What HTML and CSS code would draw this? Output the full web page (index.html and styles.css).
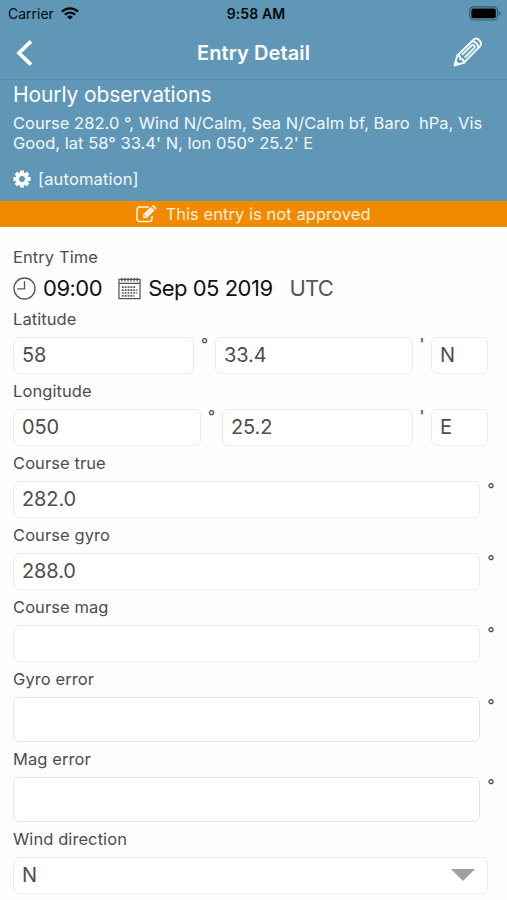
FILE: index.html
```html
<!DOCTYPE html>
<html lang="en">
<head>
<meta charset="utf-8">
<title>Entry Detail</title>
<link rel="stylesheet" href="styles.css">
</head>
<body>
<header class="top">
  <div class="status">
    <div class="carrier"><span>Carrier</span>
      <svg class="wifi" width="18" height="13" viewBox="0 0 18 13"><g fill="none" stroke="#05090c" stroke-width="2.3"><path d="M1 4.7a11.3 11.3 0 0 1 16 0"/><path d="M3.9 7.8a7.2 7.2 0 0 1 10.2 0"/></g><path d="M9 12.6 6.1 9.9a4.2 4.2 0 0 1 5.8 0z" fill="#05090c"/></svg>
    </div>
    <span class="clock">9:58 AM</span>
    <svg class="battery" width="32" height="15" viewBox="0 0 32 15"><rect x=".8" y=".8" width="27.6" height="13.2" rx="3.6" fill="none" stroke="#345870" stroke-width="1.2"/><rect x="2.4" y="2.6" width="24.4" height="9.6" rx="1.8" fill="#000"/><path d="M29.7 5.2q1.8.6 1.8 2.2t-1.8 2.2z" fill="#345870"/></svg>
  </div>
  <nav class="nav">
    <svg class="back" width="20" height="30" viewBox="0 0 20 30"><path d="M17 3.4 5 15l12 11.6" fill="none" stroke="#fff" stroke-width="3.8"/></svg>
    <h1 class="title">Entry Detail</h1>
    <svg class="pencil" width="32" height="32" viewBox="0 0 32 32"><g fill="none" stroke="#eef7fb" stroke-width="2" stroke-linejoin="round" stroke-linecap="round"><path d="M2.5 29.5 5.2 19.8 21.8 3.5q2.6-2.2 5.5.8t.9 5.8L11.8 26.8z"/><path d="M5.2 19.8q3.6-.2 3.1 3.3 3.8-.2 3.5 3.7M20 5.3q5.4.3 6.4 6.5"/><path d="m10.6 18.4 9.2-9.1q1.4-.8 2.4.2t.2 2.4l-9.2 9.1"/></g><path d="m2.5 29.5 1.4-5 3.6 3.5z" fill="#fff"/></svg>
  </nav>
</header>
<section class="summary">
  <h2 class="heading">Hourly observations</h2>
  <p class="details"><span class="line">Course 282.0 °, Wind N/Calm, Sea N/Calm bf, Baro&nbsp; hPa, Vis</span> <span class="line">Good, lat 58° 33.4' N, lon 050° 25.2' E</span></p>
  <div class="source">
    <svg width="18" height="18" viewBox="-9 -9 18 18"><g fill="#fff"><rect x="-2" y="-8.6" width="4" height="17.2" rx=".6"/><rect x="-2" y="-8.6" width="4" height="17.2" rx=".6" transform="rotate(45)"/><rect x="-2" y="-8.6" width="4" height="17.2" rx=".6" transform="rotate(90)"/><rect x="-2" y="-8.6" width="4" height="17.2" rx=".6" transform="rotate(135)"/><circle r="6.6"/></g><circle r="2.9" fill="#6097b6"/></svg>
    <span>[automation]</span>
  </div>
</section>
<div class="banner">
  <svg width="21" height="18" viewBox="0 0 21 18"><path d="M13 2H4a3 3 0 0 0-3 3v8.5a3 3 0 0 0 3 3h9a3 3 0 0 0 3-3v-2.4" fill="none" stroke="#fff0da" stroke-width="1.6"/><path d="m7.2 9.2 7.6-7.4 3.7 3.7-7.6 7.5H7.2zM15.8 1l.8-.7q.8-.5 1.5.1l2 2q.7.8 0 1.6l-.7.7z" fill="#fff0da"/><path d="m8.1 10 1.9 2" stroke="#f28a00" stroke-width=".9"/></svg>
  <span>This entry is not approved</span>
</div>
<main class="form">
  <div class="label entry-time">Entry Time</div>
  <div class="time-row">
    <svg width="23" height="23" viewBox="0 0 23 23"><circle cx="11.5" cy="11.5" r="10.5" fill="none" stroke="#55585b" stroke-width="1.3"/><path d="M11.5 4.2v7.6H4.3" fill="none" stroke="#55585b" stroke-width="1.3"/></svg>
    <span class="hour">09:00</span>
    <svg class="calendar" width="23" height="23" viewBox="0 0 24 23"><path d="M1 2h22v20H1zM1 6.2h22" fill="none" stroke="#505559" stroke-width="1.3"/><path d="M3.4 2.3h18" stroke="#505559" stroke-width="4" stroke-dasharray="1.3 1.9"/><path d="M4 10h14M4 13.2h16M4 16.2h16M4 19.2h13" stroke="#505559" stroke-width="1.8" stroke-dasharray="1.9 1.1"/></svg>
    <span class="date">Sep 05 2019</span>
    <span class="zone">UTC</span>
  </div>
  <div class="label">Latitude</div>
  <div class="row"><div class="field lat-degrees">58</div><span class="unit">°</span><div class="field grow">33.4</div><span class="unit minute">'</span><div class="field hemisphere">N</div></div>
  <div class="label">Longitude</div>
  <div class="row"><div class="field lon-degrees">050</div><span class="unit">°</span><div class="field grow">25.2</div><span class="unit minute">'</span><div class="field hemisphere">E</div></div>
  <div class="label">Course true</div>
  <div class="row single"><div class="field grow">282.0</div><span class="unit">°</span></div>
  <div class="label">Course gyro</div>
  <div class="row single"><div class="field grow">288.0</div><span class="unit">°</span></div>
  <div class="label">Course mag</div>
  <div class="row single"><div class="field grow"></div><span class="unit">°</span></div>
  <div class="label">Gyro error</div>
  <div class="row single"><div class="field grow tall"></div><span class="unit">°</span></div>
  <div class="label">Mag error</div>
  <div class="row single"><div class="field grow tall"></div><span class="unit">°</span></div>
  <div class="label">Wind direction</div>
  <div class="row"><div class="field grow select"><span>N</span><svg width="24" height="12" viewBox="0 0 24 12"><path d="M0 0h24L12 12z" fill="#a0a0a0"/></svg></div></div>
</main>
</body>
</html>
```
FILE: styles.css
```css
* { box-sizing: border-box; }
body {
  margin: 0;
  width: 507px;
  height: 900px;
  overflow: hidden;
  background: #fefefe;
  color: #4b4d50;
  font-family: Inter, "Liberation Sans", sans-serif;
}
svg { display: block; flex: none; }
h1, h2, p { margin: 0; font-weight: 400; }
.top, .summary { background: #6097b6; color: #fff; }
.top { height: 80px; border-bottom: 1px solid #568cab; }
.status {
  display: grid;
  grid-template-columns: 1fr auto 1fr;
  align-items: center;
  height: 27px;
  padding: 0 6px 0 8px;
  color: #05090c;
  font-size: 14px;
}
.carrier { display: flex; align-items: center; gap: 7px; }
.clock { padding-left: 3px; font-weight: 600; letter-spacing: .1px; }
.battery { justify-self: end; }
.nav {
  display: grid;
  grid-template-columns: 1fr auto 1fr;
  align-items: center;
  height: 51px;
  padding: 0 23px 0 14px;
}
.title { padding-left: 9px; font-size: 20px; font-weight: 600; letter-spacing: .1px; line-height: 24px; }
.pencil { justify-self: end; margin-top: -2px; }
.summary { height: 121px; padding: 1px 13px 0; }
.heading { font-size: 21px; line-height: 27px; letter-spacing: -.1px; }
.details { margin-top: 5px; font-size: 16.5px; line-height: 20px; letter-spacing: .03px; color: #f2f8fb; }
.line { display: block; white-space: nowrap; }
.source { display: flex; align-items: center; gap: 7px; height: 20px; margin-top: 16px; font-size: 16.5px; letter-spacing: .15px; color: #f2f8fb; }
.banner {
  display: flex;
  align-items: center;
  justify-content: center;
  gap: 8px;
  height: 26px;
  background: #f28a00;
  color: #fff0da;
  font-size: 16.5px;
  letter-spacing: .06px;
}
.form { padding: 12px 19px 0 13px; }
.label { height: 35px; line-height: 35px; font-size: 16.5px; letter-spacing: .08px; }
.entry-time { line-height: 37px; }
.time-row { display: flex; align-items: center; height: 28px; font-size: 22px; letter-spacing: -.5px; color: #101112; white-space: nowrap; }
.hour { margin-left: 7px; }
.calendar { margin-left: 16px; }
.date { margin-left: 7px; }
.zone { margin-left: 17px; letter-spacing: -.9px; color: #55585c; }
.row { display: flex; align-items: flex-start; }
.row.single { margin-right: -12px; }
.field {
  display: flex;
  align-items: center;
  height: 37px;
  padding: 0 8px 1px;
  border: 1px solid #ececed;
  border-radius: 6px;
  background: #fff;
  font-size: 20px;
  letter-spacing: -.1px;
}
.grow { flex: 1; }
.tall { height: 45px; border: 1.5px solid #e5e5e6; }
.lat-degrees { width: 181px; }
.lon-degrees { width: 188px; }
.hemisphere { width: 57px; }
.unit { width: 21px; font-size: 15.5px; font-weight: 500; line-height: 15px; text-align: center; }
.minute { width: 18px; }
.single .unit { width: 20px; padding-left: 2px; line-height: 18px; }
.select { justify-content: space-between; padding-right: 12px; }
```
